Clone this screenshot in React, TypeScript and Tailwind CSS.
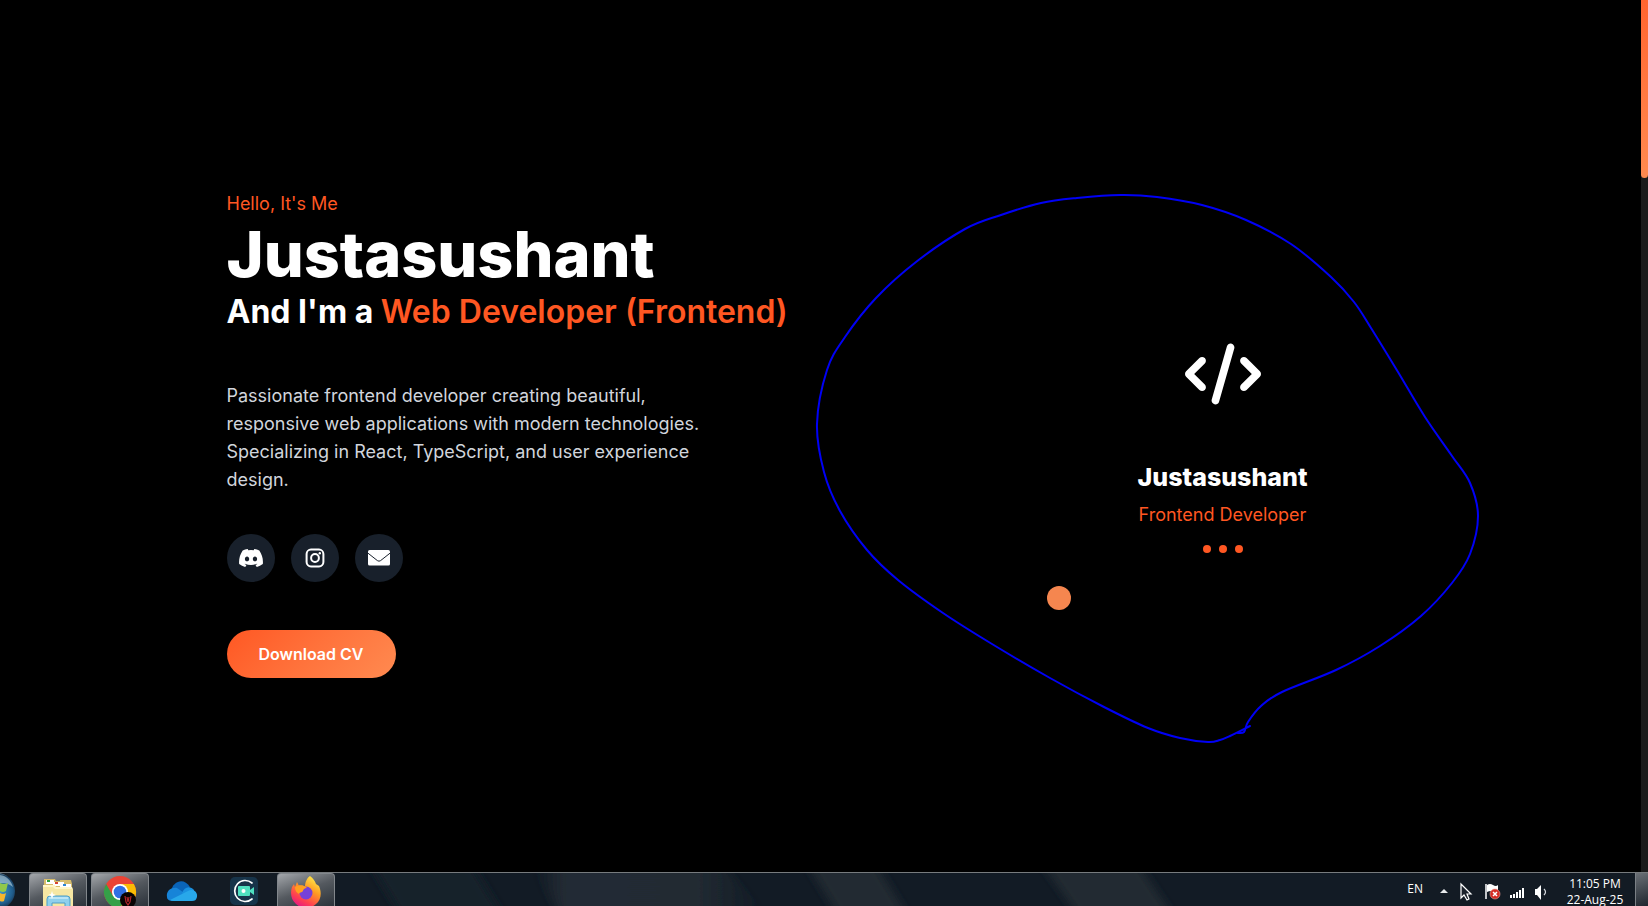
import { FaCode, FaDiscord } from "react-icons/fa6";

type Point = [number, number];

const outline: Point[] = [
  [1250, 726], [1230, 736], [1220, 740], [1208, 742], [1180, 738], [1148, 728], [1104, 707],
  [1050, 678], [992, 644], [943, 613], [898, 580], [867, 550], [840, 511], [824, 472],
  [817, 424], [827, 370], [845, 337], [876, 298], [916, 262], [965, 229], [1001, 215],
  [1041, 203], [1077, 198], [1121, 195], [1157, 197], [1202, 205], [1246, 220], [1291, 244],
  [1331, 277], [1354, 302], [1371, 328], [1398, 372], [1425, 417], [1452, 456], [1470, 483],
  [1478, 516], [1470, 554], [1452, 583], [1421, 616], [1380, 646], [1336, 670], [1282, 692],
  [1261, 706], [1248, 722], [1244, 732], [1238, 733],
];

// Catmull-Rom spline through the points, written as cubic segments.
function smooth(points: Point[]) {
  let d = `M${points[0][0]} ${points[0][1]}`;
  for (let i = 0; i < points.length - 1; i++) {
    const a = points[Math.max(i - 1, 0)];
    const b = points[i];
    const c = points[i + 1];
    const e = points[Math.min(i + 2, points.length - 1)];
    d += `C${b[0] + (c[0] - a[0]) / 6} ${b[1] + (c[1] - a[1]) / 6} ${c[0] - (e[0] - b[0]) / 6} ${c[1] - (e[1] - b[1]) / 6} ${c[0]} ${c[1]}`;
  }
  return d;
}

const socialClass =
  "flex size-12 items-center justify-center rounded-full bg-[#18202b] text-white";

function InstagramIcon() {
  return (
    <svg className="size-5" viewBox="0 0 20 20" fill="none" stroke="currentColor" aria-hidden="true">
      <rect x="1.6" y="1.6" width="16.8" height="16.8" rx="4.4" strokeWidth="2" />
      <circle cx="10" cy="10" r="3.9" strokeWidth="2" />
      <circle cx="14.8" cy="5.2" r="1.2" fill="currentColor" stroke="none" />
    </svg>
  );
}

function EnvelopeIcon() {
  return (
    <svg className="h-4 w-[22px]" viewBox="0 0 22 16" aria-hidden="true">
      <rect width="22" height="15.500" rx="1.600" fill="currentColor" />
      <path d="M0 3.200 9.400 10.600Q11 11.800 12.600 10.600L22 3.200" fill="none" stroke="#18202b" strokeWidth="1" />
    </svg>
  );
}

function Hero() {
  return (
    <section className="mx-auto flex w-full max-w-[1188px] items-center justify-between">
      <div>
        <p className="text-lg leading-7 text-[#ff5722]">Hello, It's Me</p>
        <h1 className="mt-1 text-[63px] leading-[64px] font-extrabold text-white">Justasushant</h1>
        <h2 className="mt-1 text-[32px] leading-[44px] font-bold text-white">
          And I'm a <span className="font-semibold text-[#ff5722]">Web Developer (Frontend)</span>
        </h2>
        <p className="mt-12 max-w-[500px] text-lg leading-7 text-gray-300">
          Passionate frontend developer creating beautiful, responsive web applications with modern
          technologies. Specializing in React, TypeScript, and user experience design.
        </p>
        <nav aria-label="Social links" className="mt-10 flex gap-4">
          <a href="#discord" aria-label="Discord" className={socialClass}>
            <FaDiscord className="size-[26px]" />
          </a>
          <a href="#instagram" aria-label="Instagram" className={socialClass}>
            <InstagramIcon />
          </a>
          <a href="#mail" aria-label="Email" className={socialClass}>
            <EnvelopeIcon />
          </a>
        </nav>
        <button
          type="button"
          className="mt-12 h-12 rounded-full bg-linear-135 from-[#ff5722] to-[#ff8a50] px-8 text-base font-semibold text-white"
        >
          Download CV
        </button>
      </div>
      <div className="mt-7 flex w-[384px] flex-col items-center">
        <FaCode className="h-[62px] w-[76px] text-white" />
        <h3 className="mt-14 text-[25px] leading-8 font-extrabold text-white">Justasushant</h3>
        <p className="mt-2 text-lg leading-7 text-[#ff5722]">Frontend Developer</p>
        <div className="mt-4 flex gap-2">
          <span className="size-2 rounded-full bg-[#ff5722]" />
          <span className="size-2 rounded-full bg-[#ff5722]" />
          <span className="size-2 rounded-full bg-[#ff5722]" />
        </div>
      </div>
    </section>
  );
}

function StartOrb() {
  return (
    <svg className="h-[34px] w-4" viewBox="0 0 16 34" aria-hidden="true">
      <defs>
        <radialGradient id="orb" cx="0" cy="18" r="18" gradientUnits="userSpaceOnUse">
          <stop offset="0" stopColor="#3d9bd0" />
          <stop offset="0.7" stopColor="#205d8c" />
          <stop offset="0.9" stopColor="#1a3d5c" />
          <stop offset="1" stopColor="#8fb3c9" />
        </radialGradient>
      </defs>
      <circle cx="-3" cy="18" r="18" fill="url(#orb)" />
      <path d="M-3 2C5 1 11 7 13 14C8 10 2 9-3 11Z" fill="#b9d2df" opacity=".6" />
      <path d="M0 10Q4 12 8 10L6 18Q3 20 0 18Z" fill="#91c94b" />
      <path d="M0 20Q3 22 6 20L4 28Q2 29 0 28Z" fill="#f8b62d" />
    </svg>
  );
}

function FolderIcon() {
  return (
    <svg className="h-[34px] w-9" viewBox="0 1 36 34" aria-hidden="true">
      <path d="M4 8V6h11l1 2h4V7h11l1 4v24H3Z" fill="#d7bd6c" />
      <path d="M6 7h8v4H6Z" fill="#fff" /><path d="M7 7h3v2H7Z" fill="#2f9e3a" />
      <path d="M13 9h11v4H13Z" fill="#fff" /><path d="M15 9h3v2h-3Z" fill="#d8442f" />
      <path d="M20 11h11v4H20Z" fill="#fff" /><path d="M23 11h3v2h-3Z" fill="#2c86d1" />
      <path d="M3 12h11l2 2h16l1 2v19H3Z" fill="#f6e7a3" />
      <path d="M3 12h11l2 2h16v2H15l-2-2H3Z" fill="#fff6c8" />
      <path d="M7 35V26q0-3 3-3h17q3 0 3 3v9h-5v-5H12v5Z" fill="#8fd0ec" stroke="#4d9dc8" />
      <path d="M9 25h19" stroke="#e6f9ff" strokeWidth="1" />
      <path d="M12 18l1 3 3 1-3 1-1 3-1-3-3-1 3-1Z" fill="#fff" />
    </svg>
  );
}

function ChromeIcon() {
  return (
    <svg className="h-[34px] w-9" viewBox="0 1 36 34" aria-hidden="true">
      <circle cx="18" cy="19" r="16" fill="#ea4335" />
      <path d="M18 11h13.860A16 16 0 0 1 18 35L25 23Z" fill="#fbbc05" />
      <path d="M4.140 11A16 16 0 0 0 18 35L25 23 11 23Z" fill="#34a048" />
      <circle cx="18" cy="19" r="8" fill="#fff" />
      <circle cx="18" cy="19" r="6.300" fill="#2f6fe4" />
      <circle cx="26" cy="27" r="8" fill="#080404" />
      <path d="M23 23l1 6 2 3 2-3 1-6M25 24l1 5 1-5" fill="none" stroke="#b3262b" strokeWidth="1.200" />
    </svg>
  );
}

function CloudIcon() {
  return (
    <svg className="h-[34px] w-9" viewBox="0 1 36 34" aria-hidden="true">
      <path d="M7 19C9 9 20 5 26 15L20 21Z" fill="#0a64b8" />
      <path d="M3 25C2 19 7 15 13 16L26 25 10 29C6 29 3 28 3 25Z" fill="#1784d8" />
      <path d="M18 21C20 15 26 13 30 18L31 27 20 24Z" fill="#1a91e0" />
      <path d="M6 28 24 19C29 16 34 20 33 25C32 28 31 29 28 29H10Q7 29 6 28Z" fill="#28a8ea" />
    </svg>
  );
}

function RecorderIcon() {
  return (
    <svg className="h-[34px] w-9" viewBox="0 1 36 34" aria-hidden="true">
      <rect x="4" y="5" width="28" height="28" rx="5" fill="#17344a" />
      <path d="M26 11A10.500 10.500 0 1 0 26 27" fill="none" stroke="#fff" strokeWidth="1.700" strokeLinecap="round" />
      <rect x="12" y="14" width="12" height="10" rx="1" fill="#4fe0c0" />
      <path d="M24 18l4-3v8l-4-3Z" fill="#4fe0c0" />
      <circle cx="17.500" cy="19" r="2" fill="#fff" />
    </svg>
  );
}

function FirefoxIcon() {
  return (
    <svg className="h-[34px] w-9" viewBox="0 1 36 34" aria-hidden="true">
      <defs>
        <linearGradient id="fire" x1="28" y1="4" x2="10" y2="34" gradientUnits="userSpaceOnUse">
          <stop offset="0" stopColor="#fff04d" />
          <stop offset="0.4" stopColor="#ff9a22" />
          <stop offset="0.75" stopColor="#ff4050" />
          <stop offset="1" stopColor="#e31587" />
        </linearGradient>
      </defs>
      <path d="M22 3C25 5 27 8 28 11L31 13C34 20 33 27 28 31C23 36 13 36 8 31C3 27 2 20 4 14L6 11 7 14 9 9 11 13C14 12 16 13 17 14C17 9 19 5 22 3Z" fill="url(#fire)" />
      <circle cx="18" cy="20" r="6.500" fill="#7641d8" />
      <path d="M7 14C11 11 17 12 19 15C16 15 15 17 15 18C14 20 11 19 11 21C9 20 7 18 7 14Z" fill="#ff9f20" />
    </svg>
  );
}

const activeTask =
  "flex w-[58px] justify-center rounded-t-sm border border-b-0 border-[#82878c] bg-linear-160 from-[#a4a7ab] via-[#54595f] to-[#2c333b]";

function Taskbar() {
  return (
    <footer className="flex h-[34px] shrink-0 overflow-hidden border-t border-[#777b7e] bg-[#131b24] text-white">
      <button type="button" aria-label="Start" className="w-[29px]">
        <StartOrb />
      </button>
      <div className="flex gap-1">
        <button type="button" aria-label="File Explorer" className={activeTask}><FolderIcon /></button>
        <button type="button" aria-label="Chrome" className={activeTask}><ChromeIcon /></button>
        <button type="button" aria-label="OneDrive" className="flex w-[58px] justify-center"><CloudIcon /></button>
        <button type="button" aria-label="Screen recorder" className="flex w-[58px] justify-center"><RecorderIcon /></button>
        <button type="button" aria-label="Firefox" className={activeTask}><FirefoxIcon /></button>
      </div>
      <div className="h-full flex-1">
        <svg className="h-full w-full" viewBox="0 0 1060 34" preserveAspectRatio="none" aria-hidden="true">
          <defs>
            <linearGradient id="sheen">
              <stop offset="0" stopColor="#232b34" stopOpacity="0" />
              <stop offset=".12" stopColor="#232b34" />
              <stop offset=".7" stopColor="#222b33" />
              <stop offset="1" stopColor="#222b33" stopOpacity="0" />
            </linearGradient>
            <filter id="soft" x="-10%" y="-50%" width="120%" height="200%">
              <feGaussianBlur stdDeviation="5 0" />
            </filter>
          </defs>
          <rect width="1060" height="34" fill="#121b25" />
          <g filter="url(#soft)">
            <path d="M40 0H140L160 34H60Z" fill="#18212a" />
            <path d="M200 0H390L420 34H218Z" fill="url(#sheen)" />
            <path d="M472 0H540L560 34H492Z" fill="#222a33" />
            <path d="M705 0H800L822 34H728Z" fill="#222a33" />
          </g>
        </svg>
      </div>
      <div className="flex text-[12px]">
        <span className="mt-2 font-['Open_Sans',sans-serif] leading-4">EN</span>
        <svg className="ml-4 h-[34px] w-[116px]" viewBox="0 2 116 34" aria-hidden="true">
          <path d="M1 22 5 18 9 22Z" fill="#e8eaec" />
          <path d="M22 13v14l3-3 3 5 2-1-2-5h4Z" fill="#1b222b" stroke="#fff" strokeWidth="1.200" />
          <path d="M47 13v15" stroke="#fff" strokeWidth="1.500" />
          <path d="M48 14q3-2 6 0t5 0v8q-3 1-5-1t-6 0Z" fill="#fff" />
          <circle cx="56" cy="23" r="5" fill="#d52c24" stroke="#f1a096" strokeWidth=".6" />
          <path d="m54 21 4 4m0-4-4 4" stroke="#fff" strokeWidth="1.500" />
          <path d="M71 24h2v3h-2Zm3-1h2v4h-2Zm3-2h2v6h-2Zm3-2h2v8h-2Zm3-2h2v10h-2Z" fill="#fff" />
          <path d="M96 18h2l4-4v15l-4-5h-2Z" fill="#fff" />
          <path d="M105 18q3 3 0 6" fill="none" stroke="#d8dbe0" strokeWidth="1.200" />
        </svg>
        <time className="mt-[3px] ml-2.5 w-[60px] text-center font-['Open_Sans',sans-serif] leading-4 whitespace-nowrap">
          <span className="block">11:05 PM</span>
          <span className="block">22-Aug-25</span>
        </time>
      </div>
      <button
        type="button"
        aria-label="Show desktop"
        className="ml-2.5 w-[13px] border-l border-[#7b8085] bg-linear-160 from-[#6b7076] to-[#20272f]"
      />
    </footer>
  );
}

export default function App() {
  return (
    <div className="flex min-h-screen flex-col bg-black font-['Inter',sans-serif]">
      <div className="relative flex flex-1">
        <main className="flex flex-1 items-center pb-1">
          <Hero />
        </main>
        <div className="w-[7px] bg-[#1a1a1a]">
          <div className="h-[178px] rounded-b bg-linear-to-b from-[#ff642f] to-[#ff8a50]" />
        </div>
        <span className="absolute top-[586px] left-[1047px] size-6 rounded-full bg-[#f5864f]" />
        <svg
          className="pointer-events-none absolute top-0 left-0"
          width="1641"
          height="872"
          viewBox="0 0 1641 872"
          aria-hidden="true"
        >
          <path d={smooth(outline)} fill="none" stroke="#0000f5" strokeWidth="2" strokeLinecap="round" />
        </svg>
      </div>
      <Taskbar />
    </div>
  );
}
